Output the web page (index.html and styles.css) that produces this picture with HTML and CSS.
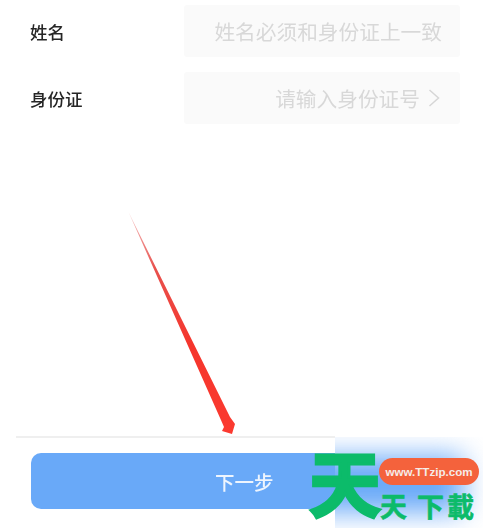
FILE: index.html
```html
<!DOCTYPE html>
<html lang="zh-CN">
<head>
<meta charset="utf-8">
<title>身份验证</title>
<link rel="stylesheet" href="styles.css">
</head>
<body>
<main class="page">
  <section class="form">
    <div class="row">
      <span class="label">姓名</span>
      <div class="field"><span class="hint">姓名必须和身份证上一致</span></div>
    </div>
    <div class="row">
      <span class="label">身份证</span>
      <div class="field">
        <span class="hint">请输入身份证号</span>
        <svg class="chev" viewBox="0 0 12 20" width="12" height="20"><path d="M1.5 2 L10.5 10 L1.5 18" fill="none" stroke="#d6d6d6" stroke-width="1.5"/></svg>
      </div>
    </div>
  </section>
  <footer class="footer">
    <button class="next" type="button">下一步</button>
  </footer>
</main>

<svg class="arrow" viewBox="0 0 483 528" width="483" height="528">
  <defs>
    <linearGradient id="fade" gradientUnits="userSpaceOnUse" x1="129" y1="213" x2="232" y2="433">
      <stop offset="0" stop-color="#f6c4c4"/>
      <stop offset="0.25" stop-color="#e8524e"/>
      <stop offset="0.6" stop-color="#f5352c"/>
      <stop offset="1" stop-color="#fb3a30"/>
    </linearGradient>
  </defs>
  <polygon fill="url(#fade)" points="128.5,212 230,417 235,424 232,434 222,431 224,427 220.5,419"/>
</svg>

<aside class="mark">
  <div class="glow"><div class="glow-core"></div></div>
  <span class="big">天</span>
  <span class="pill">www.TTzip.com</span>
  <span class="name"><span class="name-a">天</span><span class="name-b">下</span><span class="name-c">載</span></span>
</aside>
</body>
</html>
```

FILE: styles.css
```css
* { box-sizing: border-box; }

html, body {
  margin: 0;
  padding: 0;
  height: 528px;
  overflow: hidden;
  background: #fff;
  font-family: "Noto Sans CJK SC", "Noto Sans", sans-serif;
}

.page {
  height: 528px;
  display: flex;
  flex-direction: column;
  justify-content: space-between;
  padding-top: 5px;
}

.form {
  display: flex;
  flex-direction: column;
  gap: 15px;
  padding: 0 23px 0 30px;
}

.row {
  display: flex;
  align-items: center;
  height: 52px;
}

.label {
  width: 154px;
  font-size: 17.5px;
  font-weight: 500;
  color: #262626;
  filter: blur(0.35px);
}

.field {
  flex: 1;
  height: 52px;
  display: flex;
  align-items: center;
  justify-content: flex-end;
  gap: 8px;
  padding-right: 18px;
  background: #fafafa;
  border-radius: 3px;
  filter: blur(0.6px);
}

.hint {
  font-size: 20.7px;
  color: #d8d8d8;
}

.chev { margin-right: 2px; }

.footer {
  margin: 0 0 19px 16px;
  padding-top: 15px;
  border-top: 2px solid #efefef;
  width: 319px;
}

.next {
  display: block;
  margin-left: 15px;
  width: 420px;
  height: 56px;
  border: 0;
  border-radius: 10px;
  background: #69a9f8;
  color: #eef5fe;
  font-family: inherit;
  font-size: 19.5px;
  font-weight: 500;
  text-align: left;
  padding: 0 0 0 184px;
  filter: blur(0.3px);
}

.arrow {
  position: absolute;
  left: 0;
  top: 0;
  pointer-events: none;
  filter: blur(0.4px);
}

.mark {
  position: absolute;
  left: 0;
  top: 0;
  width: 483px;
  height: 528px;
  overflow: hidden;
  pointer-events: none;
}

.glow {
  position: absolute;
  left: 335px;
  top: 437px;
  width: 148px;
  height: 91px;
  overflow: hidden;
  background: #fff;
}

.glow-core {
  position: absolute;
  left: -40px;
  top: 19px;
  width: 168px;
  height: 56px;
  background: #69a9f8;
  filter: blur(14px);
}

.big {
  position: absolute;
  left: 309px;
  top: 432px;
  font-size: 72px;
  line-height: 96px;
  font-weight: 700;
  white-space: nowrap;
  color: #0cbb6a;
  -webkit-text-stroke: 3px #0cbb6a;
}

.pill {
  position: absolute;
  left: 379px;
  top: 458px;
  width: 100px;
  height: 27px;
  border-radius: 14px;
  background: #f4623c;
  color: #f6ece8;
  font-family: "Liberation Sans", sans-serif;
  font-size: 11.6px;
  font-weight: 700;
  line-height: 27px;
  text-align: center;
}

.name {
  position: absolute;
  left: 380px;
  top: 487px;
  display: flex;
  font-size: 27px;
  line-height: 38px;
  font-weight: 700;
  white-space: nowrap;
  color: #0cbb6a;
  -webkit-text-stroke: 0.6px #0cbb6a;
}

.name-b { margin-left: 10px; }

.name-c { margin-left: 3px; }
```
